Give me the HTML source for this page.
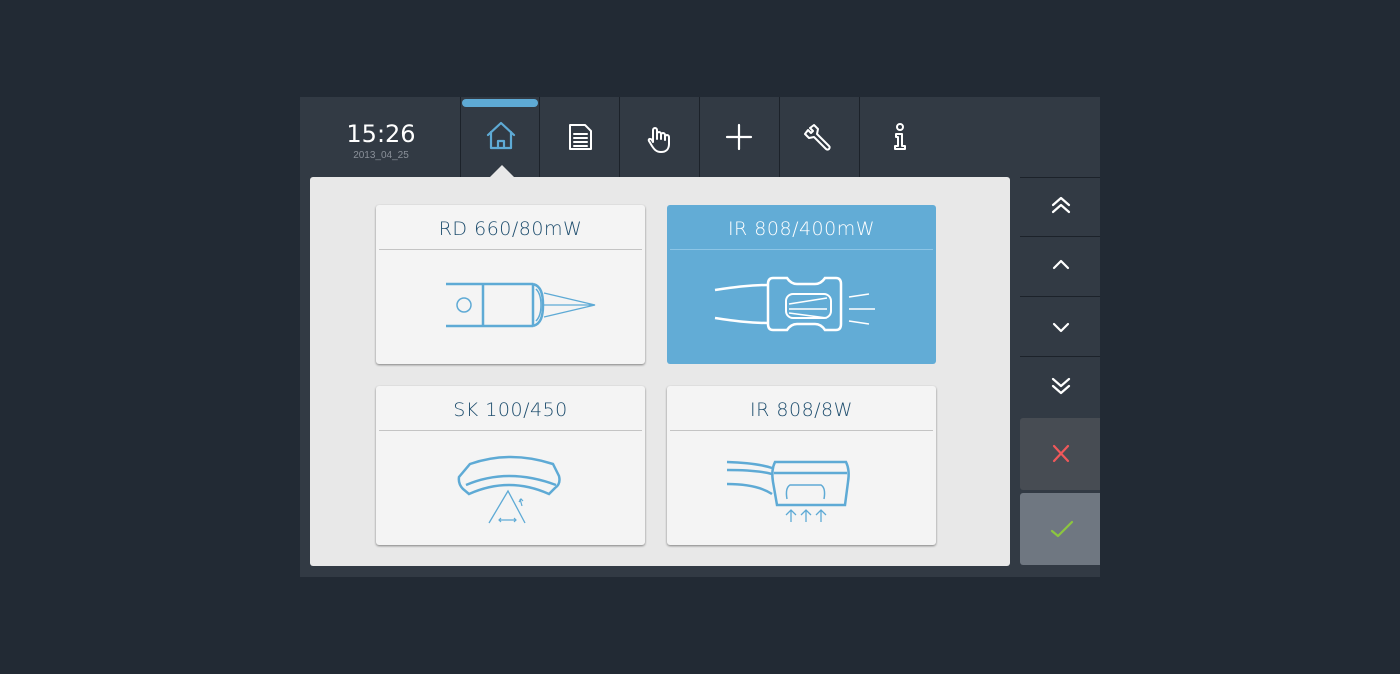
<!DOCTYPE html>
<html><head><meta charset="utf-8"><style>
*{margin:0;padding:0;box-sizing:border-box}
body{width:1400px;height:674px;background:#222a34;position:relative;overflow:hidden;font-family:"Liberation Sans","DejaVu Sans",sans-serif}
.panel{position:absolute;left:300px;top:97px;width:800px;height:480px;background:#323a44}
.div{position:absolute;top:0;width:1px;height:80px;background:#1c222a}
.time{position:absolute;left:300px;top:120px;width:162px;text-align:center;color:#fff;font-size:24px;font-family:"DejaVu Sans",sans-serif}
.date{position:absolute;left:300px;top:150px;width:162px;text-align:center;color:#8a9099;font-size:10px}
.tabbar{position:absolute;left:462px;top:99px;width:76px;height:8px;border-radius:4px;background:#5eaad5}
.content{position:absolute;left:310px;top:177px;width:700px;height:389px;background:#e8e8e8;border-radius:3px}
.ptr{position:absolute;left:490px;top:165px;width:0;height:0;border-left:12px solid transparent;border-right:12px solid transparent;border-bottom:12px solid #e8e8e8}
.card{position:absolute;width:269px;height:159px;background:#f4f4f4;border-radius:3px;box-shadow:0 1px 2px rgba(0,0,0,.45)}
.card .t{position:absolute;top:13px;width:100%;text-align:center;font-size:19px;color:#1f4e6e;letter-spacing:.5px;font-family:"DejaVu Sans",sans-serif;font-weight:300}
.card .l{position:absolute;left:3px;right:3px;top:44px;height:1px;background:#c4c4c4}
.card.sel{background:#62acd6;box-shadow:none}
.card.sel .t{color:#fff}.card.sel .l{background:#8cc5e6}
.card svg{position:absolute;left:0;top:0}
.ic{position:absolute;top:115px}
.rb{position:absolute;left:1020px;width:80px;height:1px;background:#1c222a}
.arr{position:absolute;left:1020px;width:80px}
</style></head><body>
<div class="panel"></div>
<div class="div" style="left:460px;top:97px"></div>
<div class="div" style="left:539px;top:97px"></div>
<div class="div" style="left:619px;top:97px"></div>
<div class="div" style="left:699px;top:97px"></div>
<div class="div" style="left:779px;top:97px"></div>
<div class="div" style="left:859px;top:97px"></div>
<div class="tabbar"></div>
<div class="time">15:26</div>
<div class="date">2013_04_25</div>
<svg style="position:absolute;left:0;top:0" width="1400" height="674" fill="none" stroke-linecap="round" stroke-linejoin="round">
<path d="M488 135L501 123L514 135M491 132V148H511V132M498 148V141H504V148" stroke="#5eaad5" stroke-width="2.2"/>
<path d="M570 125H585L591 131V149H570Z M574 134H587M574 138H587M574 142H587M574 146H587" stroke="#fff" stroke-width="2"/>
<path d="M653 142V130a2 2 0 0 1 4 0v9v-5a2 2 0 0 1 4 0v5v-4a2 2 0 0 1 4 0v5v-3a2 2 0 0 1 4 0v7c0 5-3 8-8 8s-7-3-9-6l-3-5c-1-2 1-3 3-1z" stroke="#fff" stroke-width="2"/>
<path d="M739 125V149M727 137H751" stroke="#fff" stroke-width="2.2"/>
<path d="M810 128l4-3 4 4-1 5 12 12a2 2 0 0 1-3 3l-12-12-5 1-4-4 3-4 3 3 2-2z" stroke="#fff" stroke-width="2"/>
<circle cx="900" cy="127" r="3" stroke="#fff" stroke-width="2"/>
<path d="M896 134H902V146H905V149H895V146H898V137H896Z" stroke="#fff" stroke-width="2"/>
</svg>
<div class="ptr"></div>
<div class="content"></div>

<div class="card" style="left:376px;top:205px"><div class="t">RD 660/80mW</div><div class="l"></div>
<svg width="269" height="159" fill="none" stroke="#5eaad5" stroke-width="2.5"><path d="M70 79H157M70 121H157M107 79V121M157 79V121M157 79c8 2 10 10 10 21s-2 19-10 21"/><path d="M160 84c4 4 5 10 5 16s-1 12-5 16" stroke-width="1.5"/><circle cx="88" cy="100" r="7" stroke-width="1.5"/><path d="M168 88L219 100L168 112M168 100H219" stroke-width="1.3"/></svg></div>

<div class="card sel" style="left:667px;top:205px"><div class="t">IR 808/400mW</div><div class="l"></div>
<svg width="269" height="159" fill="none" stroke="#fff" stroke-width="2.5"><path d="M48 85c20-3 35-5 53-5M48 113c20 3 35 5 53 5"/><path d="M106 73h14q4 6 10 6h18q6 0 10-6h11q5 0 5 6v40q0 6-5 6h-11q-4-6-10-6h-18q-6 0-10 6h-14q-5 0-5-6v-40q0-6 5-6z"/><rect x="119" y="89" width="45" height="24" rx="7" stroke-width="2"/><path d="M122 99L160 93M122 104H160M122 108L160 113M182 92L202 89M182 104H208M182 116L202 119" stroke-width="1.5"/></svg></div>

<div class="card" style="left:376px;top:386px"><div class="t">SK 100/450</div><div class="l"></div>
<svg width="269" height="159" fill="none" stroke="#5eaad5" stroke-width="2.5"><path d="M94 78q40-14 83 0l6 12q2 8-4 12l-6 6q-40-18-80 0l-6-5q-5-5-4-12z"/><path d="M90 99q42-18 90 0" /><path d="M113 137L132 105L149 137" stroke-width="1.3"/><path d="M123 134H140M125 132l-2 2 2 2M138 132l2 2-2 2M144 113l2 7M143 116l2-3 2 2" stroke-width="1.2"/></svg></div>

<div class="card" style="left:667px;top:386px"><div class="t">IR 808/8W</div><div class="l"></div>
<svg width="269" height="159" fill="none" stroke="#5eaad5" stroke-width="2.5"><path d="M60 76q30 1 45 6M60 84q30 0 45 4M60 98q30 0 45 10"/><path d="M108 76H179q4 8 2 20l-3 23H110l-4-23q-2-12 2-20zM107 87H180"/><path d="M120 113q-2-11 3-14h31q5 3 3 14" stroke-width="1.5"/><path d="M124 136V124M119 129l5-5 5 5M139 136V124M134 129l5-5 5 5M154 136V124M149 129l5-5 5 5" stroke-width="1.3"/></svg></div>

<div class="rb" style="top:177px"></div><div class="rb" style="top:236px"></div><div class="rb" style="top:296px"></div><div class="rb" style="top:356px"></div>
<div style="position:absolute;left:1020px;top:418px;width:80px;height:72px;background:#474c53;border-radius:3px 0 0 3px"></div>
<div style="position:absolute;left:1020px;top:493px;width:80px;height:72px;background:#6f7781;border-radius:3px 0 0 3px"></div>
<svg style="position:absolute;left:0;top:0" width="1400" height="674" fill="none" stroke-linecap="round" stroke-linejoin="round" stroke-width="2.2">
<path d="M1053 205L1061 198L1069 205M1053 212L1061 205L1069 212" stroke="#fff"/>
<path d="M1054 268L1061 261L1068 268" stroke="#fff"/>
<path d="M1054 324L1061 331L1068 324" stroke="#fff"/>
<path d="M1053 379L1061 386L1069 379M1053 386L1061 393L1069 386" stroke="#fff"/>
<path d="M1054 446L1068 461M1068 446L1054 461" stroke="#f0585a"/>
<path d="M1052 531L1058 536L1072 522" stroke="#8cc63f"/>
</svg>
</body></html>
